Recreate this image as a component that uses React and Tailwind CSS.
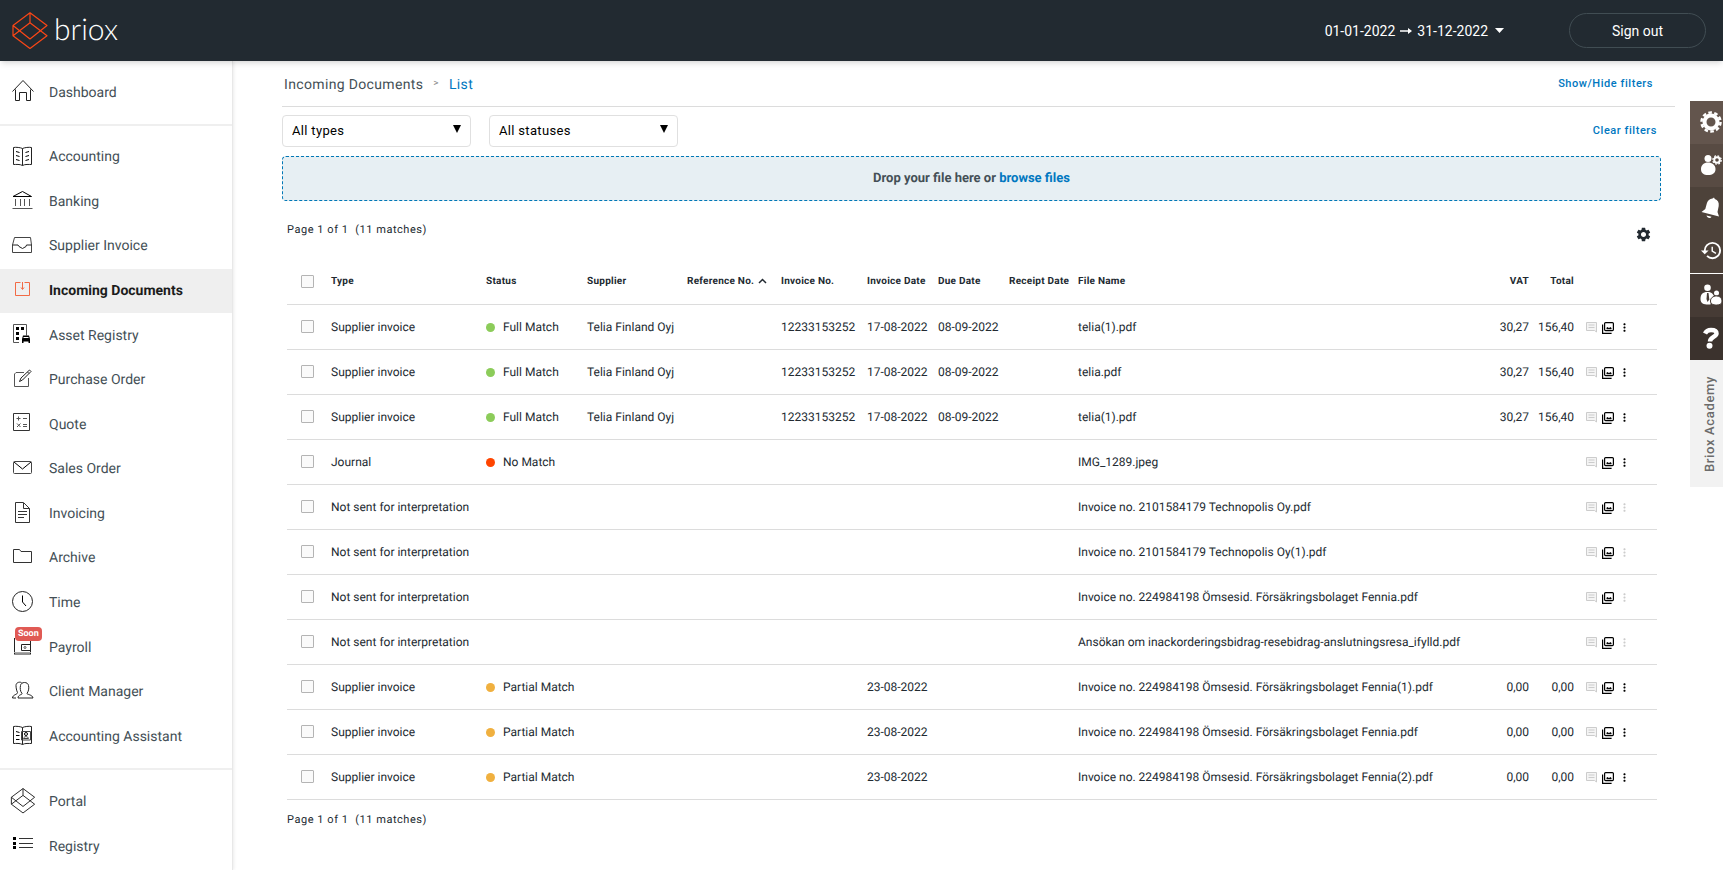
import React, { useState } from 'react';
import { MdMoreVert, MdSettings, MdHistory } from 'react-icons/md';

const Stroke = ({ children, className = 'text-black', size = 24 }) => (
  <svg width={size} height={size} viewBox={`0 0 ${size} ${size}`} fill="none" stroke="currentColor" strokeWidth="1" className={className} aria-hidden="true">
    {children}
  </svg>
);

const HomeIcon = () => (
  <Stroke>
    <path d="M.5 11.500 11 .500l10.500 11M3.500 9.500V20.500h4v-8h7v8h4v-11" stroke="#222" />
  </Stroke>
);

const BookIcon = () => (
  <Stroke>
    <path d="M10.500 4.500C8.500 3.500 4 3 1.500 3.500v17c2.500 0 6.500-.5 9 1 2.500-1.500 6.500-1 9-1v-17c-2.500-.5-7 0-9 1v17" stroke="#222" />
    <path d="M4 7.500l3.500 1M4 11.500l3.500 1M4 15.500l3.500 1M17 7.500l-3.500 1M17 11.500l-3.500 1M17 15.500l-3.500 1" />
  </Stroke>
);

const BankIcon = () => (
  <Stroke>
    <path d="M1 7.500h18.500L10.500 2.500z" />
    <path d="M3.500 10v7M8.500 10v7M12.500 10v7M17.500 10v7M.5 19.500h20" stroke="#555" />
  </Stroke>
);

const TrayIcon = () => (
  <Stroke>
    <path d="M2.500 4.500h16l1 7.500v7.500H.500V12z" stroke="#444" />
    <path d="M.5 12H6l1 1.500 3.500 2 3.500-2 .5-1.500h5" stroke="#222" />
  </Stroke>
);

const IncomingIcon = () => (
  <Stroke className="text-[#f26a45]">
    <path d="M8.500 4.500h-5v13h14v-13h-5M10.500 4v7M9 9.500l1.500 2 1.500-2" />
  </Stroke>
);

const AssetIcon = () => (
  <Stroke>
    <path d="M7 19.500H1.500v-18h13v11" stroke="#555" />
    <path d="M4 4h3v3H4zM9 4h3v3H9zM4 9h3v3H4zM4 14h3v3H4zM10 16l1-3.500h6l1 3.500v4h-1.500v-1.500h-5V20H10z" fill="currentColor" stroke="none" />
    <path d="M11.500 14.500h5" stroke="#fff" />
  </Stroke>
);

const EditIcon = () => (
  <Stroke>
    <path d="M12 5.500H4L2.500 7v12.500h14V11" stroke="#555" />
    <path d="M7.500 14.500l1.500-3.500 8.500-8 1.500 1.500-8.500 8.500zM15.500 5l1.500 1.500" stroke="#222" />
  </Stroke>
);

const QuoteIcon = () => (
  <Stroke>
    <path d="M1.500 1.500h16v17h-16z" stroke="#333" />
    <path d="M4.500 6.500h4M6.500 4.500v4M11 6.500h4M5 11.500l3.500 3.500M8.500 11.500L5 15M11 12.500h4M11 14.500h4" stroke="#555" />
  </Stroke>
);

const MailIcon = () => (
  <Stroke>
    <rect x="1.500" y="5.500" width="18" height="12" rx="1" stroke="#444" />
    <path d="M2 6l8.500 7L19 6" />
  </Stroke>
);

const FileIcon = () => (
  <Stroke>
    <path d="M3.500 1.500h8l6 6v14h-14zM11.500 2v5.500h6M6 10.500h9M6 13.500h9M6 16.500h6" stroke="#333" />
  </Stroke>
);

const FolderIcon = () => (
  <Stroke>
    <path d="M1.500 17.500v-13h6l1.500 2h10.500v11z" stroke="#333" />
  </Stroke>
);

const ClockIcon = () => (
  <Stroke>
    <circle cx="10.500" cy="11.500" r="10" stroke="#222" />
    <path d="M10.500 5.500V12l3.500 4" />
  </Stroke>
);

const WalletIcon = () => (
  <Stroke>
    <path d="M2.500 3v16M18.500 5v14M2 19h17" stroke="#222" />
    <path d="M18.500 9.500h-9v6h9" stroke="#222" />
    <circle cx="13" cy="12.500" r="1" stroke="#555" />
    <path d="M2 17.500h17" stroke="#aaa" />
  </Stroke>
);

const UsersIcon = () => (
  <Stroke>
    <path d="M10 14.500C8 12 8 9 8.500 6.500c.5-4 7.500-4 8 0 .5 2 .5 5-1.500 8-.5 1 5.500 1 6 4.500H6c0-3.500 5-3.500 4-4.500z" stroke="#222" />
    <path d="M9.500 3.500c-3-1-5.500.5-5.500 3 0 2 .5 5 1.500 7C6 15.500.5 15.500.5 19H4" stroke="#222" />
  </Stroke>
);

const AssistantIcon = () => (
  <Stroke>
    <path d="M10.500 3.500C8.500 2.500 4 2 1.500 2.500v17c2.500 0 6.500-.5 9 1 2.500-1.500 6.500-1 9-1v-17c-2.500-.5-7 0-9 1v17" stroke="#222" />
    <path d="M4 7.500l3.500 1M4 11.500h3.500M4 15.500h3.500" />
    <path d="M9.500 7.500h9v8.500h-9z" stroke="#444" />
    <circle cx="14" cy="10" r="1.500" />
    <path d="M11.500 14.500c.5-2.500 4.500-2.500 5 0z" stroke="#444" />
  </Stroke>
);

const ListIcon = () => (
  <Stroke>
    <path d="M7 4.500h14M7 9.500h14M7 13.500h14" stroke="#333" />
    <path d="M1 3h3v3H1zM1 8h3v3H1zM1 12h3v3H1z" fill="currentColor" stroke="none" />
  </Stroke>
);

// Stacked cube mark, shared by the logo and the Portal link
const Cube = ({ width, height, strokeWidth, className }) => (
  <svg width={width} height={height} viewBox="0 0 36 38" fill="none" stroke="currentColor" strokeWidth={strokeWidth} strokeLinejoin="round" className={className} aria-hidden="true">
    <path d="M18 .8 1 13.500 18 27l17-13.500zM18 .8v10M1 13.500v10.200L18 36.500l17-12.800-17-12.900L1 23.700" />
  </svg>
);

const PortalIcon = () => <Cube width={26} height={26} strokeWidth={1.4} className="-ml-[2px] text-[#222222]" />;

const menu = [
  { name: 'Accounting', icon: BookIcon },
  { name: 'Banking', icon: BankIcon },
  { name: 'Supplier Invoice', icon: TrayIcon },
  { name: 'Incoming Documents', icon: IncomingIcon, active: true },
  { name: 'Asset Registry', icon: AssetIcon },
  { name: 'Purchase Order', icon: EditIcon },
  { name: 'Quote', icon: QuoteIcon },
  { name: 'Sales Order', icon: MailIcon },
  { name: 'Invoicing', icon: FileIcon },
  { name: 'Archive', icon: FolderIcon },
  { name: 'Time', icon: ClockIcon },
  { name: 'Payroll', icon: WalletIcon, badge: 'Soon' },
  { name: 'Client Manager', icon: UsersIcon },
  { name: 'Accounting Assistant', icon: AssistantIcon },
];

const full = { type: 'Supplier invoice', status: 'Full Match', supplier: 'Telia Finland Oyj', invoiceNo: '12233153252', invoiceDate: '17-08-2022', dueDate: '08-09-2022', vat: '30,27', total: '156,40', menu: true };
const unsent = { type: 'Not sent for interpretation' };
const partial = { type: 'Supplier invoice', status: 'Partial Match', invoiceDate: '23-08-2022', vat: '0,00', total: '0,00', menu: true };

const documents = [
  { ...full, file: 'telia(1).pdf' },
  { ...full, file: 'telia.pdf' },
  { ...full, file: 'telia(1).pdf' },
  { type: 'Journal', status: 'No Match', file: 'IMG_1289.jpeg', menu: true },
  { ...unsent, file: 'Invoice no. 2101584179 Technopolis Oy.pdf' },
  { ...unsent, file: 'Invoice no. 2101584179 Technopolis Oy(1).pdf' },
  { ...unsent, file: 'Invoice no. 224984198 Ömsesid. Försäkringsbolaget Fennia.pdf' },
  { ...unsent, file: 'Ansökan om inackorderingsbidrag-resebidrag-anslutningsresa_ifylld.pdf' },
  { ...partial, file: 'Invoice no. 224984198 Ömsesid. Försäkringsbolaget Fennia(1).pdf' },
  { ...partial, file: 'Invoice no. 224984198 Ömsesid. Försäkringsbolaget Fennia.pdf' },
  { ...partial, file: 'Invoice no. 224984198 Ömsesid. Försäkringsbolaget Fennia(2).pdf' },
];

const statusColor = {
  'Full Match': 'bg-[#8ccc5a]',
  'No Match': 'bg-[#ff4500]',
  'Partial Match': 'bg-[#f0b03f]',
};

const NavItem = ({ item }) => {
  const Icon = item.icon;
  return (
    <li className="flex flex-1">
      <a
        href="#"
        className={`flex flex-1 items-center text-sm ${
          item.active ? 'bg-[#efefef] font-bold text-[#1c1c1c]' : 'text-[#444f56]'
        }`}
      >
        <span className="relative flex w-[49px] items-center pb-[2px] pl-3">
          <Icon />
          {item.badge && (
            <span className="absolute -top-2 left-[15px] rounded-sm bg-[#e05a54] px-[3px] text-[9px] leading-[14px] font-bold text-white">{item.badge}</span>
          )}
        </span>
        {item.name}
      </a>
    </li>
  );
};

const Sidebar = () => (
  <nav className="w-[233px] shrink-0 border-r border-[#e8e8e8] shadow-[1px_0_3px_rgba(0,0,0,0.08)]">
    <ul className="flex h-[65px] flex-col border-b-2 border-[#efefef]">
      <NavItem item={{ name: 'Dashboard', icon: HomeIcon }} />
    </ul>
    <ul className="flex h-[644px] flex-col border-b-2 border-[#efefef] py-[9px]">
      {menu.map((item) => <NavItem key={item.name} item={item} />)}
    </ul>
    <ul className="flex h-[99px] flex-col pt-[9px]">
      <NavItem item={{ name: 'Portal', icon: PortalIcon }} />
      <NavItem item={{ name: 'Registry', icon: ListIcon }} />
    </ul>
  </nav>
);

const GearIcon = () => (
  <svg width="22" height="22" viewBox="0 0 22 22" fill="none" stroke="currentColor" aria-hidden="true">
    <circle cx="11" cy="11" r="6.500" strokeWidth="4" />
    <circle cx="11" cy="11" r="9.500" strokeWidth="2.500" strokeDasharray="3.600 2.369" />
  </svg>
);

const UserGearIcon = () => (
  <svg width="22" height="22" viewBox="0 0 22 22" fill="currentColor" aria-hidden="true">
    <circle cx="8" cy="4.500" r="3.500" />
    <path d="M1 15c0-4 3-6.500 7-6.500s7.500 2.500 7.500 6.500-3 6-7.500 6-7-2-7-6z" />
    <circle cx="17" cy="6" r="2.800" fill="none" stroke="currentColor" strokeWidth="2" />
    <circle cx="17" cy="6" r="4.200" fill="none" stroke="currentColor" strokeWidth="1.300" strokeDasharray="1.800 1.500" />
  </svg>
);

const BellIcon = () => (
  <svg width="22" height="22" viewBox="0 0 22 22" fill="currentColor" aria-hidden="true">
    <path d="M12.500 1.500l1.500-1 .8 1.600c3 .9 4.400 3.600 3.900 7L17.500 15l1.500 4.500L1.500 15l3.800-3 1.500-5.500c.8-3 2.900-4.700 5.700-5z" />
    <path d="M6.500 18.500l5 1.300c-1.200 2.200-4.500 1.200-5-1.300z" />
  </svg>
);

const PeopleIcon = () => (
  <svg width="22" height="22" viewBox="0 0 22 22" fill="currentColor" aria-hidden="true">
    <circle cx="7.500" cy="3.800" r="3.300" />
    <path d="M.5 15c0-4.500 2-7 7-7 2.500 0 4 .6 5 1.800L14 12l-3 3-.5 5.500C5 21 .5 20 .5 15z" />
    <path d="M7 9h1.500l.8 6.500L7.500 18 6.500 15z" fill="#463b35" />
    <circle cx="16.500" cy="9" r="2.500" />
    <path d="M10.500 17c0-3 2.500-5 6-5s5.500 2 5.500 5-2 4-5.500 4-6-1-6-4z" stroke="#463b35" strokeWidth="1" />
  </svg>
);

const HelpIcon = () => (
  <svg width="22" height="22" viewBox="0 0 22 22" fill="none" stroke="currentColor" strokeWidth="4.500" aria-hidden="true">
    <path d="M5 6.500C6.500 3.500 8.500 3 11 3c3.300 0 5.500 1.200 5.500 3.500 0 3.500-6.500 3.500-6.500 8" />
    <circle cx="9.500" cy="18.700" r="3" fill="currentColor" stroke="none" />
  </svg>
);

const tools = [
  { name: 'Settings', icon: GearIcon, bg: 'h-[43px] bg-[#63554d]' },
  { name: 'User settings', icon: UserGearIcon, bg: 'h-[43px] bg-[#584b43]' },
  { name: 'Notifications', icon: BellIcon, bg: 'h-[43px] bg-[#4d423a]' },
  { name: 'History', icon: () => <MdHistory size={23} />, bg: 'h-[43px] bg-[#4d423a]' },
  { name: 'Clients', icon: PeopleIcon, bg: 'h-11 border-t border-white bg-[#463b35]' },
  { name: 'Help', icon: HelpIcon, bg: 'h-[43px] bg-[#3b322d]' },
];

const ToolRail = () => (
  <aside className="mt-10 w-[33px] shrink-0">
    {tools.map(({ name, icon: Icon, bg }) => (
      <button key={name} aria-label={name} className={`flex w-full items-center overflow-hidden pb-[2px] pl-[10px] text-white ${bg}`}>
        <span className="shrink-0"><Icon /></span>
      </button>
    ))}
    <a href="#" className="flex h-[127px] items-center justify-center bg-[#f2f2f2] pl-2 text-[13px] font-medium tracking-wider text-[#6b6b6b]">
      <span className="rotate-180 [writing-mode:vertical-rl]">Briox Academy</span>
    </a>
  </aside>
);

const Filter = ({ label, option }) => (
  <div className="relative w-[189px]">
    <select aria-label={label} className="h-8 w-full appearance-none rounded-sm border border-[#e0e0e0] bg-white px-[9px] text-[13px] tracking-wide text-black">
      <option>{option}</option>
    </select>
    <svg width="8" height="8" viewBox="0 0 8 8" className="pointer-events-none absolute top-[10px] right-[10px]" aria-hidden="true">
      <path d="M0 0h8L4 8z" />
    </svg>
  </div>
);

const Checkbox = ({ label, ...props }) => (
  <input type="checkbox" aria-label={label} className="ml-[14px] block h-[13px] w-[13px] appearance-none rounded-[1px] border border-[#b4b4b4] bg-[#fafafa] checked:bg-[#0077c0]" {...props} />
);

const CommentIcon = () => (
  <svg width="11" height="11" viewBox="0 0 11 11" fill="none" stroke="currentColor" aria-hidden="true">
    <path d="M.5.5h10v9.500L8.500 8.500H.5zM2.500 3h6M2.500 5.500h6" fill="#f4f4f4" />
  </svg>
);

const GalleryIcon = () => (
  <svg width="12" height="12" viewBox="0 0 12 12" fill="none" stroke="currentColor" aria-hidden="true">
    <rect x="2.600" y=".6" width="8.800" height="8" rx="1" strokeWidth="1.200" />
    <path d="M.6 2.500v8.900h9" strokeWidth="1.200" />
    <path d="M4.500 7.200V5.800l1.200-.8L7 6.200l1.200-1.200 1.300 1v1.200z" fill="currentColor" stroke="none" />
  </svg>
);

const DocumentTable = () => {
  const [selected, setSelected] = useState([]);
  const allSelected = selected.length === documents.length;

  const toggle = (i) => {
    setSelected(selected.includes(i) ? selected.filter((s) => s !== i) : [...selected, i]);
  };

  return (
    <table className="w-full table-fixed text-left whitespace-nowrap text-[#222a31]">
      <colgroup>
        <col className="w-11" />
        <col className="w-[155px]" />
        <col className="w-[101px]" />
        <col className="w-[100px]" />
        <col className="w-[94px]" />
        <col className="w-[86px]" />
        <col className="w-[71px]" />
        <col className="w-[71px]" />
        <col className="w-[69px]" />
        <col />
        <col className="w-[49px]" />
        <col className="w-[45px]" />
        <col className="w-[83px]" />
      </colgroup>
      <thead>
        <tr className="h-[45px] border-b border-[#dcdcdc] text-[10px] tracking-wide">
          <th><Checkbox label="Select all" checked={allSelected} onChange={() => setSelected(allSelected ? [] : documents.map((_, i) => i))} /></th>
          <th>Type</th>
          <th>Status</th>
          <th>Supplier</th>
          <th>
            <span className="flex items-center gap-1">
              Reference No.
              <svg width="9" height="6" viewBox="0 0 9 6" fill="none" stroke="currentColor" strokeWidth="1.500" aria-hidden="true"><path d="M1 5l3.500-3.500L8 5" /></svg>
            </span>
          </th>
          <th>Invoice No.</th>
          <th>Invoice Date</th>
          <th>Due Date</th>
          <th>Receipt Date</th>
          <th>File Name</th>
          <th className="text-right">VAT</th>
          <th className="text-right">Total</th>
          <th />
        </tr>
      </thead>
      <tbody>
        {documents.map((doc, i) => (
          <tr key={i} className="h-[45px] border-b border-[#dcdcdc] text-xs">
            <td><Checkbox label={`Select ${doc.file}`} checked={selected.includes(i)} onChange={() => toggle(i)} /></td>
            <td>{doc.type}</td>
            <td>
              {doc.status && (
                <span className="flex items-center gap-2">
                  <span className={`mt-[2px] h-[9px] w-[9px] rounded-full ${statusColor[doc.status]}`} />
                  {doc.status}
                </span>
              )}
            </td>
            <td>{doc.supplier}</td>
            <td />
            <td>{doc.invoiceNo}</td>
            <td>{doc.invoiceDate}</td>
            <td>{doc.dueDate}</td>
            <td />
            <td>{doc.file}</td>
            <td className="text-right">{doc.vat}</td>
            <td className="text-right">{doc.total}</td>
            <td>
              <div className="flex items-center pt-[2px] pl-3">
                <button aria-label="Comment" className="text-[#cccccc]"><CommentIcon /></button>
                <button aria-label="Preview" className="ml-[5px] text-black"><GalleryIcon /></button>
                <button aria-label="More" className={`ml-1 ${doc.menu ? 'text-black' : 'text-[#cccccc]'}`}><MdMoreVert size={13} /></button>
              </div>
            </td>
          </tr>
        ))}
      </tbody>
    </table>
  );
};

const App = () => {
  return (
    <div className="flex min-h-screen flex-col bg-white font-['Roboto',sans-serif] [text-rendering:geometricPrecision]">
      <header className="relative z-10 flex h-[61px] items-center justify-between bg-[#222a31] pr-[17px] pl-3 text-white shadow-md">
        <a href="#" className="flex items-center gap-[6px]">
          <Cube width={36} height={38} strokeWidth={1.2} className="text-[#fa4616]" />
          <span className="pb-1 font-['Lato',sans-serif] text-[30px] leading-9 font-light">briox</span>
        </a>
        <div className="flex items-center">
          <button className="flex items-center text-sm">
            01-01-2022
            <svg width="12" height="8" viewBox="0 0 12 8" className="mx-[5px]" aria-hidden="true"><path d="M0 4h9" stroke="#fff" strokeWidth="1.500" /><path d="M8 1l4 3-4 3z" fill="#fff" /></svg>
            31-12-2022
            <svg width="9" height="5" viewBox="0 0 9 5" className="ml-[7px]" aria-hidden="true"><path d="M0 0h9L4.500 5z" fill="#fff" /></svg>
          </button>
          <button className="ml-[65px] h-[35px] w-[137px] rounded-full border border-[#414d53] text-sm">Sign out</button>
        </div>
      </header>

      <div className="flex flex-1">
        <Sidebar />

        <main className="min-w-0 flex-1 pr-[15px] pl-[49px]">
          <div className="flex h-[46px] items-center justify-between border-b border-[#dcdcdc] pt-[2px] pr-[22px] pl-[2px]">
            <div className="flex items-center text-sm tracking-wide">
              <a href="#" className="text-[#444f56]">Incoming Documents</a>
              <span className="mx-[10px] text-[10px] text-[#888888]">&gt;</span>
              <a href="#" className="text-[#0077c0]">List</a>
            </div>
            <button className="text-[11px] font-medium tracking-wider text-[#0077c0]">Show/Hide filters</button>
          </div>

          <div className="flex items-center gap-[18px] pt-2 pr-[18px]">
            <Filter label="Type" option="All types" />
            <Filter label="Status" option="All statuses" />
            <button className="ml-auto text-[11px] font-medium tracking-wider text-[#0077c0]">Clear filters</button>
          </div>

          <div className="mt-[9px] mr-[14px] flex h-[45px] items-center justify-center rounded-sm border border-dashed border-[#0077b6] bg-[#e7eff3] text-[13px] font-bold text-[#444f56]">
            <span>Drop your file here or <a href="#" className="text-[#0077c0]">browse files</a></span>
          </div>

          <div className="mr-[18px] ml-[5px]">
            <div className="flex h-[58px] items-center justify-between pr-[5px] text-[11px] tracking-wider text-[#222a31]">
              <span className="whitespace-pre">Page 1 of 1  (11 matches)</span>
              <button aria-label="Table settings" className="pt-2"><MdSettings size={17} /></button>
            </div>
            <DocumentTable />
            <p className="pt-3 text-[11px] tracking-wider whitespace-pre text-[#222a31]">Page 1 of 1  (11 matches)</p>
          </div>
        </main>

        <ToolRail />
      </div>
    </div>
  );
};

export default App;
